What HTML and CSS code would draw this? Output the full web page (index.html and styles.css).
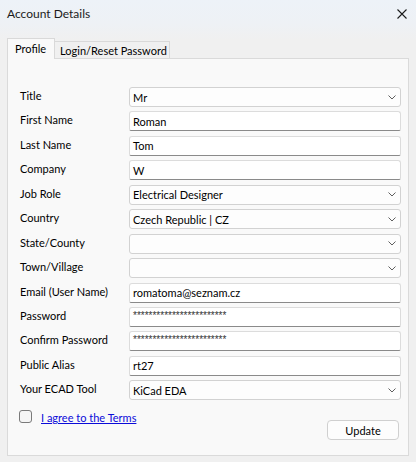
FILE: index.html
```html
<!DOCTYPE html>
<html lang="en">
<head>
<meta charset="utf-8">
<title>Account Details</title>
<link rel="stylesheet" href="styles.css">
</head>
<body>
<div class="window">
  <div class="titlebar">
    <span class="title">Account Details</span>
    <svg class="close" width="10" height="10" viewBox="0 0 10 10"><path d="M0.5 0.5 L9.5 9.5 M9.5 0.5 L0.5 9.5" stroke="#1b1b1b" stroke-width="1.1" fill="none"/></svg>
  </div>

  <div class="tabs">
    <div class="tab active">Profile</div>
    <div class="tab">Login/Reset Password</div>
  </div>

  <div class="panel">
    <div class="form">
      <div class="label">Title</div>
      <div class="field combo"><span>Mr</span><svg class="chev" width="8" height="5" viewBox="0 0 8 5"><path d="M0.5 0.5 L4 4 L7.5 0.5" stroke="#5f5f5f" fill="none"/></svg></div>

      <div class="label">First Name</div>
      <div class="field text"><span>Roman</span></div>

      <div class="label">Last Name</div>
      <div class="field text"><span>Tom</span></div>

      <div class="label">Company</div>
      <div class="field text"><span>W</span></div>

      <div class="label">Job Role</div>
      <div class="field combo"><span>Electrical Designer</span><svg class="chev" width="8" height="5" viewBox="0 0 8 5"><path d="M0.5 0.5 L4 4 L7.5 0.5" stroke="#5f5f5f" fill="none"/></svg></div>

      <div class="label">Country</div>
      <div class="field combo"><span>Czech Republic | CZ</span><svg class="chev" width="8" height="5" viewBox="0 0 8 5"><path d="M0.5 0.5 L4 4 L7.5 0.5" stroke="#5f5f5f" fill="none"/></svg></div>

      <div class="label">State/County</div>
      <div class="field combo"><span></span><svg class="chev" width="8" height="5" viewBox="0 0 8 5"><path d="M0.5 0.5 L4 4 L7.5 0.5" stroke="#5f5f5f" fill="none"/></svg></div>

      <div class="label">Town/Village</div>
      <div class="field combo"><span></span><svg class="chev" width="8" height="5" viewBox="0 0 8 5"><path d="M0.5 0.5 L4 4 L7.5 0.5" stroke="#5f5f5f" fill="none"/></svg></div>

      <div class="label">Email (User Name)</div>
      <div class="field text"><span>romatoma@seznam.cz</span></div>

      <div class="label">Password</div>
      <div class="field text"><span class="stars">************************</span></div>

      <div class="label">Confirm Password</div>
      <div class="field text"><span class="stars">************************</span></div>

      <div class="label">Public Alias</div>
      <div class="field text"><span>rt27</span></div>

      <div class="label">Your ECAD Tool</div>
      <div class="field combo"><span>KiCad EDA</span><svg class="chev" width="8" height="5" viewBox="0 0 8 5"><path d="M0.5 0.5 L4 4 L7.5 0.5" stroke="#5f5f5f" fill="none"/></svg></div>
    </div>

    <div class="footer">
      <label class="agree"><span class="checkbox"></span><a class="terms" href="#">I agree to the Terms</a></label>
      <button class="btn" type="button">Update</button>
    </div>
  </div>
</div>
</body>
</html>
```
FILE: styles.css
```css
html, body {
  margin: 0;
  padding: 0;
}
body {
  width: 416px;
  height: 462px;
  overflow: hidden;
  font-family: Lato, "Open Sans", "Liberation Sans", sans-serif;
  font-size: 11px;
  color: #000;
}
.window {
  width: 416px;
  height: 462px;
  background: linear-gradient(#edf2f8 0px, #eef1f5 24px, #f0f0f0 40px);
  display: flex;
  flex-direction: column;
}
.titlebar {
  height: 26px;
  display: flex;
  align-items: center;
  justify-content: space-between;
  padding: 0 9px 0 7px;
}
.title {
  font-size: 12px;
  color: #1b1b1b;
  padding-top: 1px;
}
.close {
  display: block;
  margin-top: 1px;
}
.tabs {
  display: flex;
  align-items: flex-end;
  margin: 12px 0 0 7px;
  height: 20px;
}
.tab {
  height: 17px;
  display: flex;
  align-items: center;
  padding: 0 2px 0 5px;
  margin-left: -1px;
  border: 1px solid #d9d9d9;
  border-bottom: none;
  background: #f0f0f0;
  color: #000;
  box-sizing: border-box;
}
.tab.active {
  height: 21px;
  margin-left: 0;
  padding: 0 8px 1px 7px;
  background: #f9f9f9;
  position: relative;
  z-index: 1;
  margin-bottom: -1px;
}
.panel {
  margin: 0 7px;
  height: 398px;
  box-sizing: border-box;
  border: 1px solid #dadada;
  background: #f9f9f9;
  padding: 28px 7px 0 12px;
}
.form {
  display: grid;
  grid-template-columns: 109px 272px;
  grid-auto-rows: 20px;
  row-gap: 4.45px;
}
.label {
  align-self: center;
  padding-bottom: 3px;
  color: #000;
}
.field {
  box-sizing: border-box;
  height: 20px;
  display: flex;
  align-items: center;
  justify-content: space-between;
  padding: 0 4px 0 3px;
  background: #ffffff;
  border: 1px solid #dcdcdc;
  border-radius: 3px;
  color: #000;
  white-space: nowrap;
}
.field.text {
  border-bottom: 1px solid #8a8a8a;
  border-radius: 3px 3px 2px 2px;
}
.field.combo {
  background: #fdfdfd;
  border-color: #d2d2d2;
}
.chev {
  display: block;
  flex: none;
}
.stars {
  font-family: "Liberation Sans", sans-serif;
  font-size: 10px;
  color: #333;
  margin-top: -3px;
}
.footer {
  display: flex;
  justify-content: space-between;
  align-items: flex-start;
  margin: 10px 2px 0 -1px;
}
.agree {
  display: flex;
  align-items: center;
  gap: 9px;
  height: 13px;
}
.checkbox {
  box-sizing: border-box;
  width: 13px;
  height: 13px;
  border: 1px solid #7a7a7a;
  border-radius: 3px;
  background: #f5f5f5;
}
.terms {
  color: #0b0bd9;
  text-decoration: underline;
  font-size: 11px;
  line-height: 13px;
  margin-top: 1px;
}
.btn {
  margin-top: 10px;
  width: 72px;
  height: 20px;
  box-sizing: border-box;
  border: 1px solid #d0d0d0;
  border-radius: 4px;
  background: #fdfdfd;
  font-family: Lato, "Open Sans", "Liberation Sans", sans-serif;
  font-size: 11px;
  color: #000;
  padding: 0;
}
```
